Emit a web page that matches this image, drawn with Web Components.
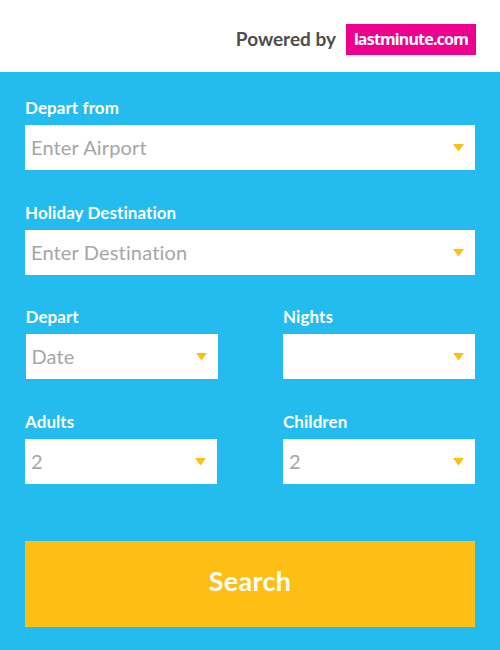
<!DOCTYPE html>
<html lang="en">
<head>
<meta charset="utf-8">
<title>Holiday search</title>
<style>
    body {
        margin: 0;
        background: #24bbef;
        font-family: Lato, "Open Sans", sans-serif;
        font-variant-ligatures: none;
    }
</style>
</head>
<body>
<holiday-search>
    <powered-by slot="header" label="Powered by">lastminute.com</powered-by>
    <select-field label="Depart from" value="Enter Airport" class="wide"></select-field>
    <select-field label="Holiday Destination" value="Enter Destination" class="wide"></select-field>
    <select-field label="Depart" value="Date" class="inset"></select-field>
    <select-field label="Nights" value=""></select-field>
    <select-field label="Adults" value="2"></select-field>
    <select-field label="Children" value="2"></select-field>
    <search-button slot="action">Search</search-button>
</holiday-search>

<script>
class PoweredBy extends HTMLElement {
    connectedCallback() {
        this.attachShadow({ mode: 'open' });
        this.shadowRoot.innerHTML = `
            <style>
                :host {
                    display: flex;
                    justify-content: flex-end;
                    align-items: center;
                    box-sizing: border-box;
                    height: 72px;
                    padding: 6px 24px 0 0;
                    background: #fff;
                }
                .label {
                    margin-right: 10px;
                    color: #4d4d4d;
                    font-size: 19px;
                    font-weight: 700;
                    line-height: 30px;
                }
                .brand {
                    box-sizing: border-box;
                    width: 130px;
                    height: 31px;
                    background: #ec008c;
                    color: #fff;
                    font: 700 16px/31px "Noto Sans", sans-serif;
                    letter-spacing: -0.8px;
                    text-align: center;
                    white-space: nowrap;
                }
            </style>
            <span class="label">${this.getAttribute('label')}</span>
            <span class="brand"><slot></slot></span>
        `;
    }
}

class SelectField extends HTMLElement {
    connectedCallback() {
        const label = this.getAttribute('label') || '';
        const value = this.getAttribute('value') || '';

        this.attachShadow({ mode: 'open' });
        this.shadowRoot.innerHTML = `
            <style>
                :host {
                    display: block;
                }
                .label {
                    height: 20px;
                    margin-bottom: 7px;
                    padding-top: 1px;
                    color: #fff;
                    font-size: 17px;
                    font-weight: 700;
                    letter-spacing: 0.07px;
                    line-height: 20px;
                    white-space: nowrap;
                }
                .box {
                    display: flex;
                    justify-content: space-between;
                    align-items: center;
                    box-sizing: border-box;
                    height: 45px;
                    padding: 0 11px 0 6px;
                    background: #fff;
                    color: #a6a6a6;
                    font-size: 20px;
                    letter-spacing: 0.15px;
                    line-height: 45px;
                }
                svg {
                    display: block;
                    fill: #fdbf14;
                }
            </style>
            <div class="label">${label}</div>
            <div class="box">
                <span>${value}</span>
                <svg width="11" height="8" viewBox="0 0 11 8"><path d="M0 0h11L5.5 7.6z"/></svg>
            </div>
        `;
    }
}

class SearchButton extends HTMLElement {
    connectedCallback() {
        this.attachShadow({ mode: 'open' });
        this.shadowRoot.innerHTML = `
            <style>
                :host {
                    display: block;
                }
                button {
                    display: block;
                    width: 100%;
                    height: 86px;
                    padding: 0 0 7px;
                    border: 0;
                    background: #fdbf14;
                    color: #fff;
                    font: 700 27px/79px Lato, sans-serif;
                    letter-spacing: 0.3px;
                }
            </style>
            <button type="button"><slot></slot></button>
        `;
    }
}

class HolidaySearch extends HTMLElement {
    connectedCallback() {
        this.attachShadow({ mode: 'open' });
        this.shadowRoot.innerHTML = `
            <style>
                :host {
                    display: block;
                    height: 650px;
                    overflow: hidden;
                }
                form {
                    padding: 25px 25px 0;
                }
                .fields {
                    display: grid;
                    grid-template-columns: 192px 192px;
                    grid-template-rows: 73px 72px 73px 73px;
                    justify-content: space-between;
                    row-gap: 32px;
                    margin-bottom: 57px;
                }
                ::slotted(.wide) {
                    grid-column: 1 / -1;
                }
                ::slotted(.inset) {
                    margin: 0 -0.5px 0 0.5px;
                }
            </style>
            <slot name="header"></slot>
            <form>
                <div class="fields"><slot></slot></div>
                <slot name="action"></slot>
            </form>
        `;
    }
}

customElements.define('powered-by', PoweredBy);
customElements.define('select-field', SelectField);
customElements.define('search-button', SearchButton);
customElements.define('holiday-search', HolidaySearch);
</script>
</body>
</html>
